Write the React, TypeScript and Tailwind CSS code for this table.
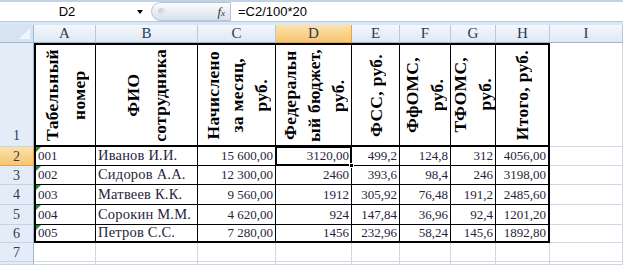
import React, { Fragment } from 'react'

type Head = { lines: string[]; lead: string }

const letters = ['A', 'B', 'C', 'D', 'E', 'F', 'G', 'H', 'I']

const heads: Head[] = [
  { lines: ['Табельный', 'номер'], lead: 'leading-[27px]' },
  { lines: ['ФИО', 'сотрудника'], lead: 'leading-[27px]' },
  { lines: ['Начислено', 'за месяц,', 'руб.'], lead: 'leading-[24px]' },
  { lines: ['Федеральн', 'ый бюджет,', 'руб.'], lead: 'leading-[24px]' },
  { lines: ['ФСС, руб.'], lead: 'leading-[24px]' },
  { lines: ['ФфОМС,', 'руб.'], lead: 'leading-[25px]' },
  { lines: ['ТФОМС,', 'руб.'], lead: 'leading-[25px]' },
  { lines: ['Итого, руб.'], lead: 'leading-[24px]' },
]

const data = [
  ['001', 'Иванов И.И.', '15 600,00', '3120,00', '499,2', '124,8', '312', '4056,00'],
  ['002', 'Сидоров А.А.', '12 300,00', '2460', '393,6', '98,4', '246', '3198,00'],
  ['003', 'Матвеев К.К.', '9 560,00', '1912', '305,92', '76,48', '191,2', '2485,60'],
  ['004', 'Сорокин М.М.', '4 620,00', '924', '147,84', '36,96', '92,4', '1201,20'],
  ['005', 'Петров С.С.', '7 280,00', '1456', '232,96', '58,24', '145,6', '1892,80'],
]

const rowHead = 'flex items-center justify-center border-r border-b border-r-[#9eb6ce] border-b-[#c5d3e4] bg-[#e4ecf7] text-[14px] text-[#2b3a55]'
const grid = 'border-r border-b border-[#d0d7e5]'

const FormulaBar = () => (
  <div className="flex h-[25px] flex-col bg-[#d9e4f2]">
    <div className="h-[2px] bg-[#c2d2e6]" />
    <div className="flex h-[19px] items-center bg-white font-['Liberation_Sans',sans-serif] text-[13px] text-black">
      <div className="flex w-[134px] justify-center">D2</div>
      <div className="ml-[3px] h-0 w-0 border-x-[3px] border-t-[4px] border-x-transparent border-t-black" />
      <div className="ml-[8px] flex h-[19px] w-[80px] items-center rounded-l-full border border-[#b4c3d6] bg-linear-to-b from-[#fbfcfd] to-[#dae1e9]">
        <div className="ml-[6px] h-[7px] w-[7px] rounded-full bg-linear-to-br from-[#c3c9d2] to-[#eef1f4]" />
        <div className="ml-auto mr-[5px] font-['Liberation_Serif',serif] text-[13px] italic text-[#333]">
          f<span className="text-[9px]">x</span>
        </div>
      </div>
      <div className="ml-[7px]">=C2/100*20</div>
    </div>
    <div className="flex-1 border-t border-[#b7c9df] bg-[#dbe6f4]" />
  </div>
)

const VertHead = ({ h, i }: { h: Head; i: number }) => (
  <div
    className={`flex items-center justify-center border-y-2 border-r border-black ${i === 0 ? 'border-l-2' : ''} ${i === 7 ? 'border-r-2' : ''}`}
  >
    <div className={`rotate-180 text-center text-[17.5px] font-bold tracking-[0.3px] text-black [writing-mode:vertical-rl] ${h.lead}`}>
      {h.lines.map((l, k) => (
        <Fragment key={k}>
          {k > 0 && <br />}
          {l}
        </Fragment>
      ))}
    </div>
  </div>
)

export default function App() {
  return (
    <div className="h-[265px] w-[623px] overflow-hidden bg-white font-['Liberation_Serif',serif]">
      <FormulaBar />
      <div className="grid h-[240px] grid-cols-[34px_62px_102px_78px_76px_48px_51px_45px_54px_1fr] grid-rows-[18px_104px_19px_19px_20px_20px_18px_19px_1fr]">
        {/* column headers */}
        <div className="relative border-r border-b border-[#9eb6ce] bg-[#d6e3f3]">
          <div className="absolute right-[3px] bottom-[3px] h-0 w-0 border-b-[11px] border-l-[11px] border-b-[#f2f6fb] border-l-transparent" />
        </div>
        {letters.map((c) => (
          <div
            key={c}
            className={`flex items-center justify-center border-r border-b text-[15px] ${
              c === 'D'
                ? 'border-[#f2a03c] bg-linear-to-b from-[#fbe2ac] to-[#f6c56f] text-[#2b3a55]'
                : 'border-r-[#b6c8dc] border-b-[#9eb6ce] bg-linear-to-b from-[#f4f7fc] to-[#dfe8f4] text-[#2b3a55]'
            }`}
          >
            {c}
          </div>
        ))}

        {/* row 1 */}
        <div className={`${rowHead} items-end! pb-0`}>1</div>
        {heads.map((h, i) => (
          <VertHead key={i} h={h} i={i} />
        ))}
        <div className={grid} />

        {/* data rows */}
        {data.map((r, ri) => (
          <Fragment key={ri}>
            <div
              className={
                ri === 0
                  ? 'flex items-center justify-center border-r border-b border-[#f2a03c] bg-linear-to-b from-[#fbe2ac] to-[#f6c56f] text-[14px] text-[#2b3a55]'
                  : rowHead
              }
            >
              {ri + 2}
            </div>
            {r.map((v, ci) => (
              <div
                key={ci}
                className={`relative flex items-center overflow-visible whitespace-nowrap border-r border-black text-[#281e3c] ${
                  ci < 2 ? 'justify-start pl-[2px]' : 'justify-end pr-[2px]'
                } ${ci === 1 ? 'text-[14.5px] tracking-[0.2px]' : 'text-[13px]'} ${ri === 4 ? 'border-b-2' : 'border-b'} ${ci === 0 ? 'border-l-2' : ''} ${ci === 7 ? 'border-r-2' : ''}`}
              >
                {ci === 0 && (
                  <div className="absolute top-0 left-0 h-0 w-0 border-t-[5px] border-r-[5px] border-t-[#1f8f3a] border-r-transparent" />
                )}
                {ri === 0 && ci === 3 && (
                  <>
                    <div className="absolute -inset-[1px] border-2 border-black" />
                    <div className="absolute -right-[3px] -bottom-[3px] z-10 h-[5px] w-[5px] border border-white bg-black" />
                  </>
                )}
                {v}
              </div>
            ))}
            <div className={grid} />
          </Fragment>
        ))}

        {/* empty rows */}
        {[7, 8].map((n) => (
          <Fragment key={n}>
            <div className={rowHead}>{n === 7 ? 7 : ''}</div>
            {letters.map((c) => (
              <div key={c} className={grid} />
            ))}
          </Fragment>
        ))}
      </div>
    </div>
  )
}
